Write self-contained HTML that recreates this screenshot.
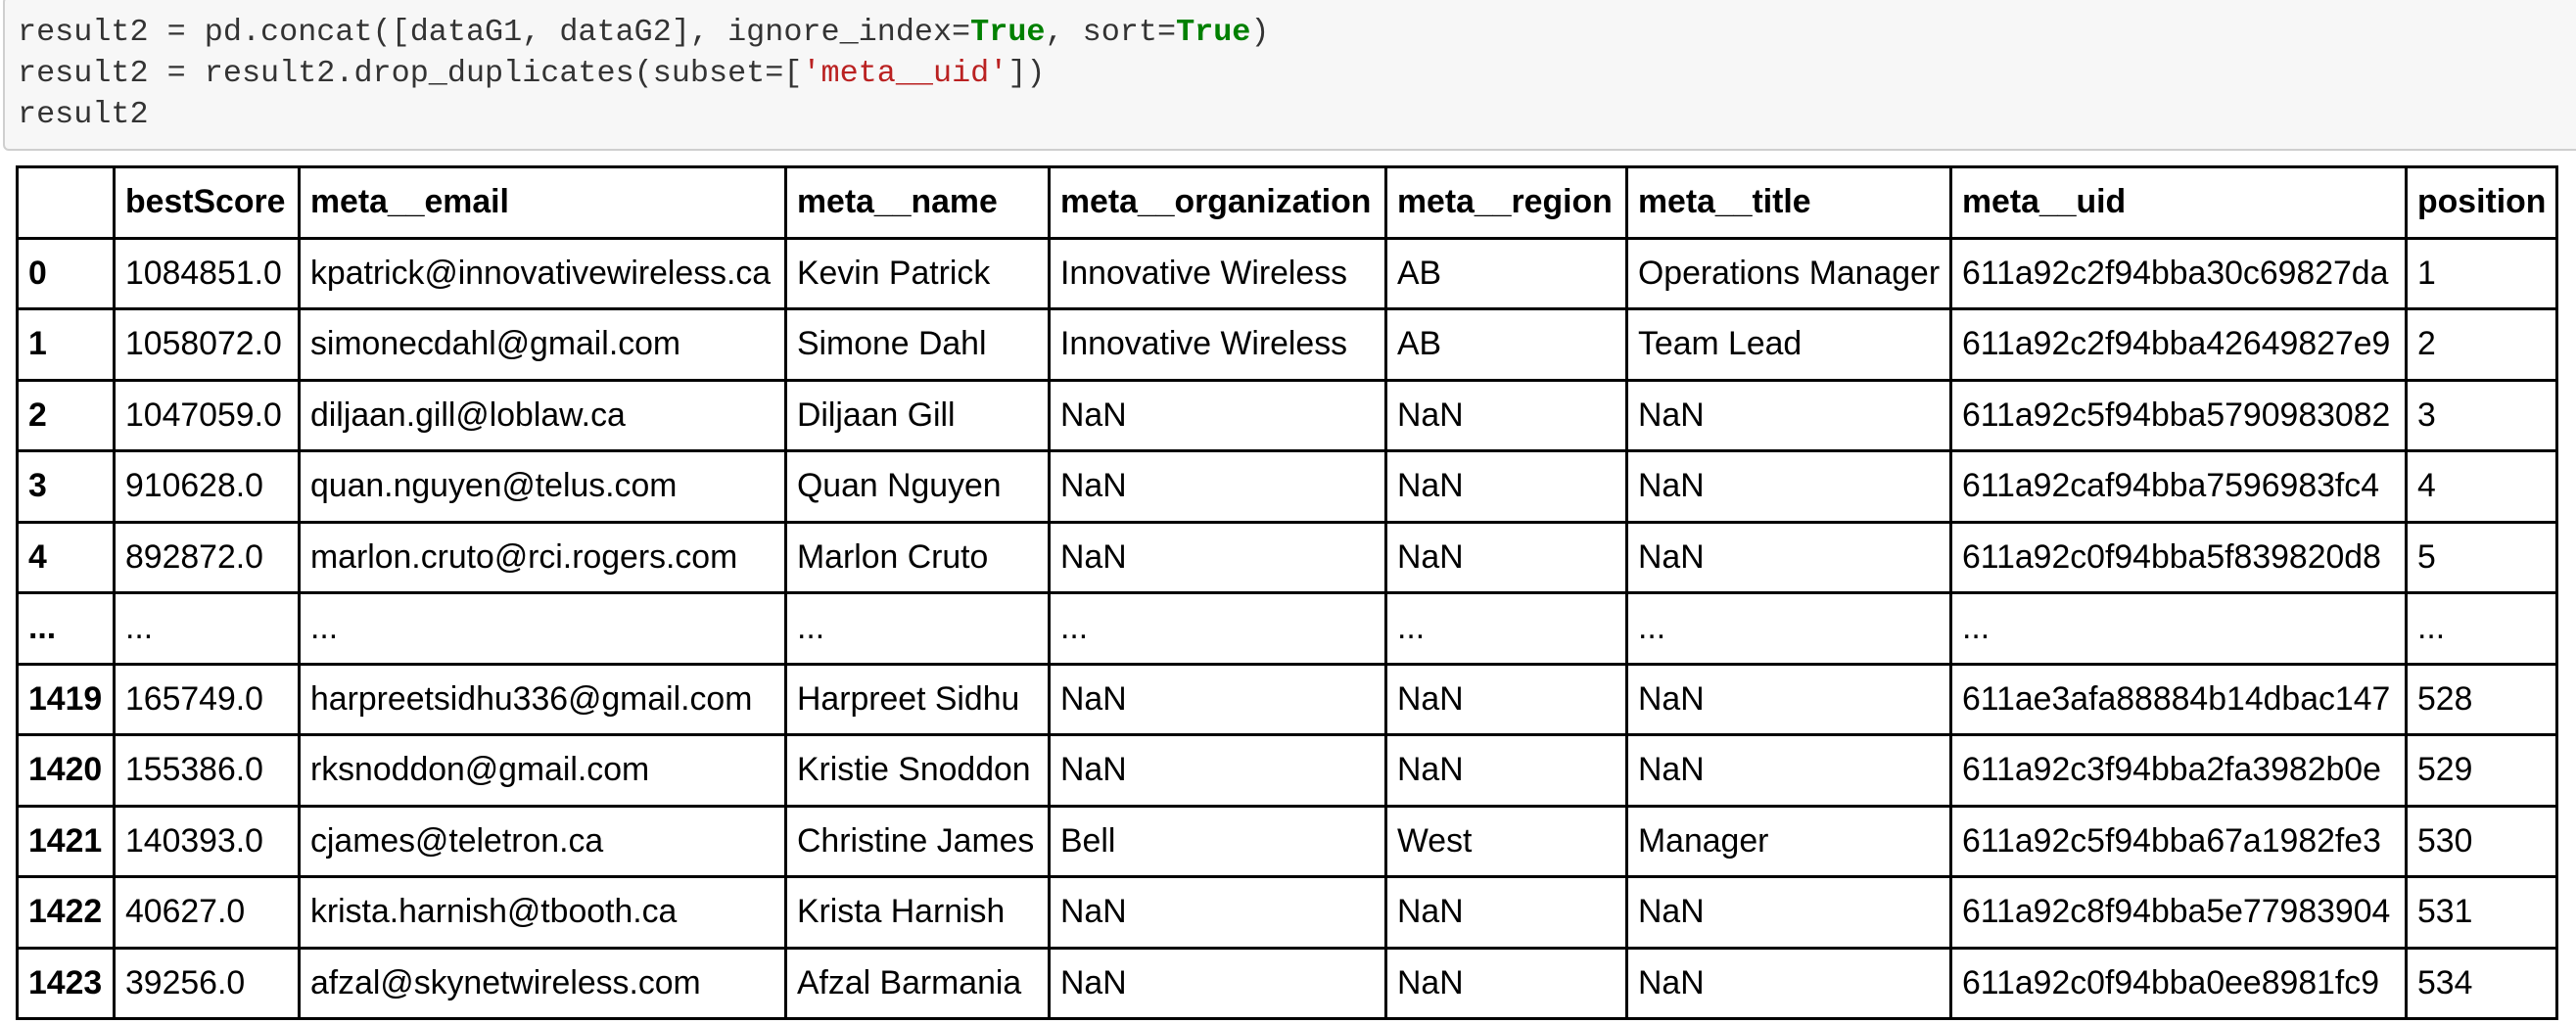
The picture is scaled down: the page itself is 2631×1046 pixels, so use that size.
<!DOCTYPE html>
<html><head><meta charset="utf-8"><style>
html,body{margin:0;padding:0;background:#fff;width:2631px;height:1046px;overflow:hidden}
.code{position:absolute;left:3px;top:-4px;width:2640px;height:158px;background:#f7f7f7;border:2px solid #cfcfcf;border-radius:6px;box-sizing:border-box}
.code pre{margin:0;position:absolute;left:13px;top:14px;font-family:"Liberation Mono",monospace;font-size:31.8px;line-height:42px;color:#333}
.g{color:#008000;font-weight:bold}.s{color:#ba2121}
table{position:absolute;left:16px;top:169px;border-collapse:collapse;table-layout:fixed;font-family:"Liberation Sans",Arial,sans-serif;font-size:33.8px;color:#000}
tr{height:72.5px}
td,th{border:3px solid #000;height:69.5px;padding:0 0 0 10px;text-align:left;white-space:nowrap;overflow:hidden;vertical-align:middle;box-sizing:border-box}
th{font-weight:bold}
td.i{font-weight:bold}
</style></head><body>
<div class="code"><pre>result2 = pd.concat([dataG1, dataG2], ignore_index=<span class="g">True</span>, sort=<span class="g">True</span>)
result2 = result2.drop_duplicates(subset=[<span class="s">'meta__uid'</span>])
result2</pre></div>
<table>
<colgroup><col style="width:99px"><col style="width:189px"><col style="width:497px"><col style="width:269px"><col style="width:344px"><col style="width:246px"><col style="width:331px"><col style="width:465px"><col style="width:154px"></colgroup>
<tr><th></th><th>bestScore</th><th>meta__email</th><th>meta__name</th><th>meta__organization</th><th>meta__region</th><th>meta__title</th><th>meta__uid</th><th>position</th></tr>
<tr><td class="i">0</td><td>1084851.0</td><td>kpatrick@innovativewireless.ca</td><td>Kevin Patrick</td><td>Innovative Wireless</td><td>AB</td><td>Operations Manager</td><td>611a92c2f94bba30c69827da</td><td>1</td></tr>
<tr><td class="i">1</td><td>1058072.0</td><td>simonecdahl@gmail.com</td><td>Simone Dahl</td><td>Innovative Wireless</td><td>AB</td><td>Team Lead</td><td>611a92c2f94bba42649827e9</td><td>2</td></tr>
<tr><td class="i">2</td><td>1047059.0</td><td>diljaan.gill@loblaw.ca</td><td>Diljaan Gill</td><td>NaN</td><td>NaN</td><td>NaN</td><td>611a92c5f94bba5790983082</td><td>3</td></tr>
<tr><td class="i">3</td><td>910628.0</td><td>quan.nguyen@telus.com</td><td>Quan Nguyen</td><td>NaN</td><td>NaN</td><td>NaN</td><td>611a92caf94bba7596983fc4</td><td>4</td></tr>
<tr><td class="i">4</td><td>892872.0</td><td>marlon.cruto@rci.rogers.com</td><td>Marlon Cruto</td><td>NaN</td><td>NaN</td><td>NaN</td><td>611a92c0f94bba5f839820d8</td><td>5</td></tr>
<tr><td class="i">...</td><td>...</td><td>...</td><td>...</td><td>...</td><td>...</td><td>...</td><td>...</td><td>...</td></tr>
<tr><td class="i">1419</td><td>165749.0</td><td>harpreetsidhu336@gmail.com</td><td>Harpreet Sidhu</td><td>NaN</td><td>NaN</td><td>NaN</td><td>611ae3afa88884b14dbac147</td><td>528</td></tr>
<tr><td class="i">1420</td><td>155386.0</td><td>rksnoddon@gmail.com</td><td>Kristie Snoddon</td><td>NaN</td><td>NaN</td><td>NaN</td><td>611a92c3f94bba2fa3982b0e</td><td>529</td></tr>
<tr><td class="i">1421</td><td>140393.0</td><td>cjames@teletron.ca</td><td>Christine James</td><td>Bell</td><td>West</td><td>Manager</td><td>611a92c5f94bba67a1982fe3</td><td>530</td></tr>
<tr><td class="i">1422</td><td>40627.0</td><td>krista.harnish@tbooth.ca</td><td>Krista Harnish</td><td>NaN</td><td>NaN</td><td>NaN</td><td>611a92c8f94bba5e77983904</td><td>531</td></tr>
<tr><td class="i">1423</td><td>39256.0</td><td>afzal@skynetwireless.com</td><td>Afzal Barmania</td><td>NaN</td><td>NaN</td><td>NaN</td><td>611a92c0f94bba0ee8981fc9</td><td>534</td></tr>
</table>
</body></html>
